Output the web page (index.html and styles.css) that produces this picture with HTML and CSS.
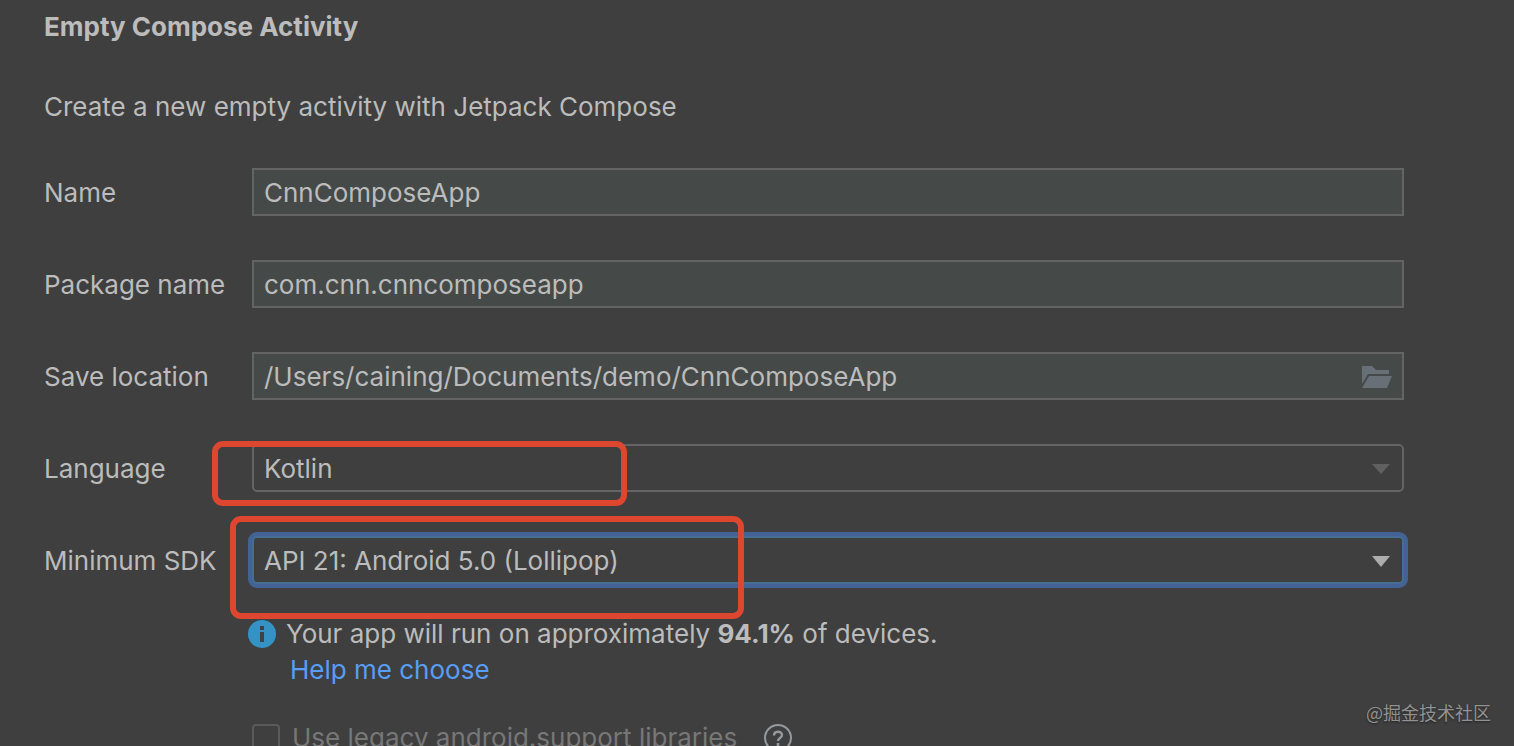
FILE: index.html
```html
<!DOCTYPE html>
<html lang="en">
<head>
<meta charset="utf-8">
<title>Empty Compose Activity</title>
<link rel="stylesheet" href="styles.css">
</head>
<body>
<main class="wizard">
  <h1 class="title">Empty Compose Activity</h1>
  <p class="description">Create a new empty activity with Jetpack Compose</p>

  <form class="form">
    <div class="row">
      <label class="label" for="name">Name</label>
      <input class="field" id="name" type="text" value="CnnComposeApp" spellcheck="false">
    </div>
    <div class="row">
      <label class="label" for="package">Package name</label>
      <input class="field" id="package" type="text" value="com.cnn.cnncomposeapp" spellcheck="false">
    </div>
    <div class="row">
      <label class="label" for="location">Save location</label>
      <div class="control">
        <input class="field" id="location" type="text" value="/Users/caining/Documents/demo/CnnComposeApp" spellcheck="false">
        <button class="browse" type="button" aria-label="Browse">
          <svg width="32" height="24" viewBox="0 0 32 24"><path d="M1 19V1h10l4 4h13v4H7z" fill="#686f77"/><path d="M8 11h23l-5 12H1z" fill="#686f77"/></svg>
        </button>
      </div>
    </div>
    <div class="row">
      <label class="label" for="language">Language</label>
      <div class="control">
        <select class="field select" id="language"><option>Kotlin</option></select>
        <svg class="arrow arrow-dim" width="18" height="10" viewBox="0 0 18 10"><path d="M0 0h18L9 10z"/></svg>
        <span class="mark mark-language"></span>
      </div>
    </div>
    <div class="row">
      <label class="label" for="sdk">Minimum SDK</label>
      <div class="control">
        <select class="field select select-active" id="sdk"><option>API 21: Android 5.0 (Lollipop)</option></select>
        <svg class="arrow" width="18" height="11" viewBox="0 0 18 11"><path d="M0 0h18L9 11z"/></svg>
        <span class="mark mark-sdk"></span>
      </div>
    </div>

    <div class="notes">
      <p class="info">
        <svg class="info-icon" width="28" height="28" viewBox="0 0 28 28"><circle cx="14" cy="14" r="14" fill="#3592c4"/><path d="M12 6h4v4h-4zM12 12h4v10h-4z" fill="#3c4246"/></svg>
        <span>Your app will run on approximately <strong>94.1%</strong> of devices.</span>
      </p>
      <a class="link" href="#">Help me choose</a>
      <div class="legacy">
        <input class="check" id="legacy" type="checkbox" disabled>
        <label for="legacy">Use legacy android.support libraries</label>
        <button class="help" type="button" aria-label="Help">
          <svg width="28" height="28" viewBox="0 0 28 28" fill="none" stroke="#969a9d" stroke-width="2"><circle cx="14" cy="14" r="13"/><path d="M10 11.5c0-5 8-5 8-.5 0 3-4 3-4 6" stroke-width="2.4"/><path d="M14 19v3" stroke-width="2.6"/></svg>
        </button>
      </div>
    </div>
  </form>
</main>
<div class="watermark">@掘金技术社区</div>
</body>
</html>
```
FILE: styles.css
```css
* {
  box-sizing: border-box;
}

body {
  margin: 0;
  height: 100vh;
  overflow: hidden;
  position: relative;
  background: #3f3f3f;
  color: #bcbcbc;
  font-family: Inter, "Liberation Sans", sans-serif;
  font-size: 26px;
  line-height: 32px;
}

button,
input,
select {
  font: inherit;
  color: inherit;
  margin: 0;
}

.wizard {
  padding: 11px 110px 0 44px;
}

.title {
  margin: 0 0 48px;
  font-size: 26px;
  font-weight: 700;
}

.description {
  margin: 0 0 45px;
}

.form {
  display: flex;
  flex-direction: column;
  gap: 44px;
}

.row {
  display: grid;
  grid-template-columns: 208px 1fr;
  align-items: center;
}

.label {
  padding-top: 2px;
}

.control {
  position: relative;
  display: grid;
}

.field {
  width: 100%;
  height: 48px;
  padding: 0 10px;
  border: 2px solid #646464;
  border-radius: 0;
  outline: none;
  background: #454a48;
}

.select {
  padding-top: 2px;
  appearance: none;
  border-radius: 5px;
  background: #3f3f3f;
}

.select-active {
  border-color: #466d94;
  box-shadow: 0 0 0 4px #436397;
}

.browse {
  position: absolute;
  top: 13px;
  right: 11px;
  display: flex;
  padding: 0;
  border: 0;
  background: none;
}

.arrow {
  position: absolute;
  top: 20px;
  right: 14px;
  fill: #adadad;
  pointer-events: none;
}

.arrow-dim {
  fill: #606060;
}

/* Hand-drawn style callouts over the two drop-downs */
.mark {
  position: absolute;
  border: 6px solid #dd4730;
  border-radius: 11px;
  pointer-events: none;
}

.mark-language {
  top: -3px;
  left: -40px;
  width: 415px;
  height: 65px;
}

.mark-sdk {
  top: -20px;
  left: -22px;
  width: 514px;
  height: 103px;
}

.notes {
  display: flex;
  flex-direction: column;
  align-items: flex-start;
  gap: 4px;
  margin-top: -10px;
  padding-left: 204px;
}

.info {
  display: flex;
  align-items: center;
  gap: 10px;
  margin: 0;
}

.link {
  margin-left: 42px;
  color: #589df6;
  text-decoration: none;
}

.legacy {
  display: flex;
  align-items: center;
  gap: 12px;
  margin-top: 32px;
  padding-left: 4px;
  color: #777777;
}

.check {
  appearance: none;
  width: 28px;
  height: 28px;
  border: 2px solid #5a5a5a;
  border-radius: 4px;
}

.help {
  display: flex;
  margin-left: 15px;
  padding: 0;
  border: 0;
  background: none;
}

.watermark {
  position: absolute;
  right: 23px;
  bottom: 22px;
  color: #929292;
  font-family: "Noto Sans CJK SC", sans-serif;
  font-size: 18px;
  line-height: 24px;
  text-shadow: 0 1px 2px #222222;
}
```
